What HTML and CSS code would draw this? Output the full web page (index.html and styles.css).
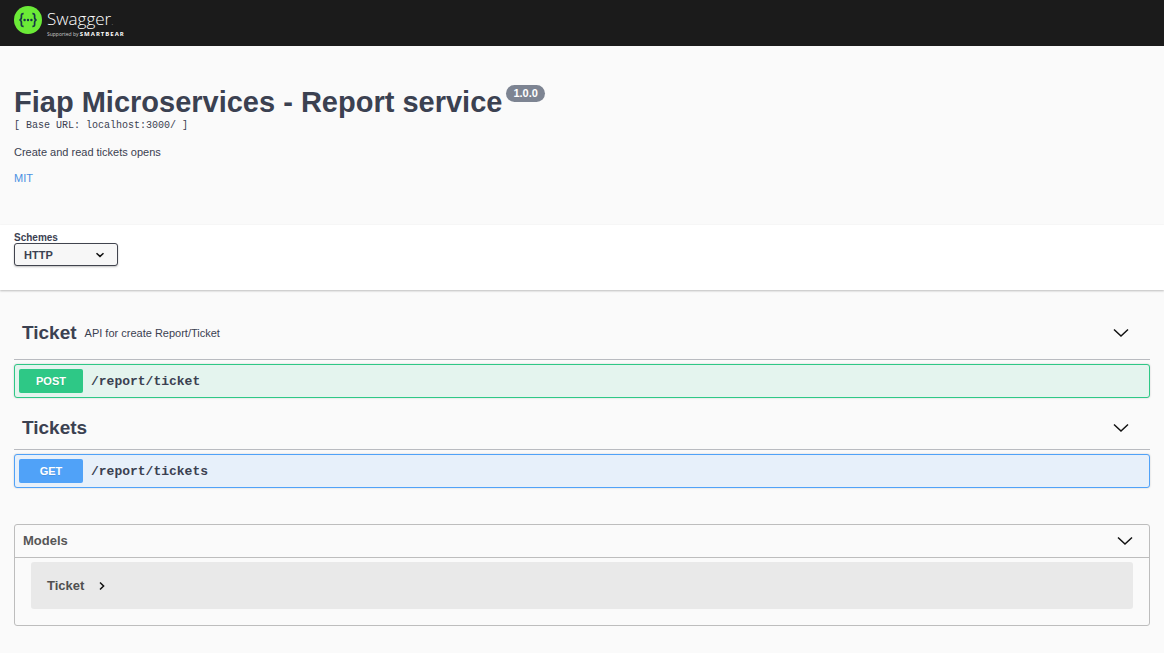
FILE: index.html
```html
<!DOCTYPE html>
<html lang="en">
<head>
<meta charset="utf-8">
<meta name="viewport" content="width=device-width, initial-scale=1">
<title>Fiap Microservices - Report service</title>
<link rel="stylesheet" href="styles.css">
</head>
<body>
<header class="topbar">
  <a class="logo" href="#">
    <svg class="logo-mark" viewBox="0 0 28 28" aria-hidden="true">
      <circle cx="14" cy="14" r="14" fill="#6bea37"/>
      <g fill="none" stroke="#173647" stroke-width="1.7">
        <path d="M9.6 7.6C7.8 7.5 7.4 8.2 7.4 9.6v2c0 1.5-.7 2.3-2 2.4 1.3.1 2 .9 2 2.4v2c0 1.400.4 2.100 2.200 2"/>
        <path d="M18.400 7.600c1.800-.1 2.200.6 2.200 2v2c0 1.500.7 2.300 2 2.400-1.300.1-2 .9-2 2.400v2c0 1.400-.4 2.100-2.200 2"/>
      </g>
      <g fill="#173647"><circle cx="10.600" cy="14" r="1.200"/><circle cx="14" cy="14" r="1.200"/><circle cx="17.400" cy="14" r="1.200"/></g>
    </svg>
    <span class="logo-text">
      <span class="logo-name">Swagger<span class="logo-dot">.</span></span>
      <span class="logo-by">Supported by <b class="logo-brand">SMARTBEAR</b></span>
    </span>
  </a>
</header>
<main>
  <section class="info">
    <h1 class="title">Fiap Microservices - Report service <span class="version">1.0.0</span></h1>
    <pre class="base-url">[ Base URL: localhost:3000/ ]</pre>
    <p class="description">Create and read tickets opens</p>
    <a class="license" href="#">MIT</a>
  </section>

  <section class="schemes">
    <label class="schemes-label" for="scheme">Schemes</label>
    <div class="select-wrap">
      <select class="select" id="scheme"><option>HTTP</option></select>
      <svg class="select-arrow" viewBox="0 0 10 6" aria-hidden="true"><path d="M1.500 1.200 5 4.400l3.500-3.200"/></svg>
    </div>
  </section>

  <div class="content">
    <section class="tag">
      <div class="tag-head tag-head-tall">
        <h2 class="tag-name">Ticket</h2>
        <p class="tag-text">API for create Report/Ticket</p>
        <button class="toggle" aria-label="Collapse Ticket"><svg class="chevron" viewBox="0 0 16 10"><path d="M1 1.500l7 6.500 7-6.500"/></svg></button>
      </div>
      <button class="op op-post"><span class="method">POST</span><span class="path">/report/ticket</span></button>
    </section>
    <section class="tag">
      <div class="tag-head">
        <h2 class="tag-name">Tickets</h2>
        <button class="toggle" aria-label="Collapse Tickets"><svg class="chevron" viewBox="0 0 16 10"><path d="M1 1.500l7 6.500 7-6.500"/></svg></button>
      </div>
      <button class="op op-get"><span class="method">GET</span><span class="path">/report/tickets</span></button>
    </section>
    <section class="models">
      <div class="models-head">
        <h2 class="models-title">Models</h2>
        <button class="toggle" aria-label="Collapse Models"><svg class="chevron" viewBox="0 0 16 10"><path d="M1 1.500l7 6.500 7-6.500"/></svg></button>
      </div>
      <button class="model">Ticket <svg class="model-arrow" viewBox="0 0 6 10" aria-hidden="true"><path d="M1 1.500 4.600 5 1 8.500"/></svg></button>
    </section>
  </div>
</main>
</body>
</html>
```

FILE: styles.css
```css
* {
  box-sizing: border-box;
}

body {
  margin: 0;
  background: #fafafa;
  color: #3b4151;
  font-family: "Liberation Sans", Arial, sans-serif;
  font-size: 11px;
}

h1, h2, p, pre {
  margin: 0;
}

button {
  font: inherit;
  color: inherit;
  cursor: pointer;
}

svg {
  display: block;
}

.topbar {
  padding: 6px 14px;
  height: 46px;
  background: #1b1b1b;
}

.logo {
  display: inline-flex;
  gap: 5px;
  color: #fff;
  text-decoration: none;
  font-family: "Open Sans", sans-serif;
}

.logo-mark {
  width: 28px;
  height: 28px;
}

.logo-text {
  display: flex;
  flex-direction: column;
}

.logo-name {
  font-size: 17px;
  font-weight: 300;
  line-height: 26px;
}

.logo-dot {
  font-size: 9px;
  color: #888;
}

.logo-by {
  margin-top: -4px;
  font-size: 5px;
  line-height: 6px;
  color: #ccc;
}

.logo-brand {
  font-size: 6px;
  letter-spacing: 1px;
  color: #fff;
}

.info {
  padding: 39px 14px;
  min-height: 179px;
}

.title {
  display: flex;
  align-items: flex-start;
  gap: 4px;
  font-size: 29px;
  line-height: 34px;
}

.version {
  padding: 0 7px;
  border-radius: 16px;
  background: #7d8492;
  color: #fff;
  font-size: 11px;
  line-height: 17px;
}

.base-url {
  font-family: "Liberation Mono", monospace;
  font-size: 10px;
  line-height: 13px;
}

.description {
  margin-top: 13px;
  line-height: 14px;
}

.license {
  display: inline-block;
  margin-top: 12px;
  line-height: 14px;
  color: #4990e2;
  text-decoration: none;
}

.schemes {
  padding: 7px 14px 24px;
  background: #fff;
  box-shadow: 0 1px 2px rgba(0, 0, 0, 0.25);
}

.schemes-label {
  display: block;
  font-size: 10px;
  font-weight: 700;
  line-height: 11px;
}

.select-wrap {
  position: relative;
  width: 104px;
}

.select {
  appearance: none;
  display: block;
  width: 100%;
  height: 23px;
  padding: 0 9px;
  border: 1px solid #41444e;
  border-radius: 3px;
  background: #f7f7f7;
  box-shadow: 0 1px 2px rgba(0, 0, 0, 0.25);
  color: #3b4151;
  font-family: inherit;
  font-size: 11px;
  font-weight: 700;
}

.select-arrow {
  position: absolute;
  top: 9px;
  right: 13px;
  width: 10px;
  height: 6px;
  pointer-events: none;
}

.select-arrow path,
.model-arrow path,
.chevron path {
  fill: none;
  stroke: #111;
  stroke-width: 1.5;
}

.content {
  padding: 17px 14px 28px;
}

.tag-head {
  display: flex;
  align-items: center;
  height: 43px;
  padding: 0 20px 0 8px;
  border-bottom: 1px solid #b9bbc0;
}

.tag-head-tall {
  height: 53px;
}

.tag-name {
  font-size: 19px;
  line-height: 24px;
}

.tag-text {
  margin-left: 8px;
}

.toggle {
  margin-left: auto;
  padding: 0;
  border: 0;
  background: none;
}

.chevron {
  width: 18px;
  height: 10px;
}

.op {
  display: flex;
  align-items: center;
  gap: 8px;
  width: 100%;
  height: 34px;
  margin: 4px 0 9px;
  padding: 4px;
  border: 1px solid;
  border-radius: 3px;
  box-shadow: 0 0 2px rgba(0, 0, 0, 0.2);
}

.op-post {
  border-color: #2ec886;
  background: #e4f4ee;
}

.op-get {
  border-color: #50a2f8;
  background: #e7f0fa;
}

.method {
  width: 64px;
  border-radius: 2px;
  color: #fff;
  font-weight: 700;
  line-height: 24px;
  text-align: center;
  text-shadow: 0 1px 0 rgba(0, 0, 0, 0.1);
}

.op-post .method {
  background: #2ec886;
}

.op-get .method {
  background: #50a2f8;
}

.path {
  color: #3b4151;
  font-family: "Liberation Mono", monospace;
  font-size: 13px;
  font-weight: 700;
}

.models {
  margin-top: 36px;
  padding-bottom: 16px;
  border: 1px solid #bdbdbd;
  border-radius: 3px;
}

.models-head {
  display: flex;
  align-items: center;
  height: 33px;
  padding: 0 15px 0 8px;
  border-bottom: 1px solid #bdbdbd;
  color: #565656;
}

.models-title {
  font-size: 13px;
  line-height: 14px;
}

.model {
  display: flex;
  align-items: center;
  gap: 15px;
  width: calc(100% - 32px);
  height: 47px;
  margin: 4px 16px 0;
  padding: 0 16px;
  border: 0;
  border-radius: 3px;
  background: #e9e9e9;
  color: #505050;
  font-size: 13px;
  font-weight: 700;
}

.model-arrow {
  width: 6px;
  height: 10px;
}
```
